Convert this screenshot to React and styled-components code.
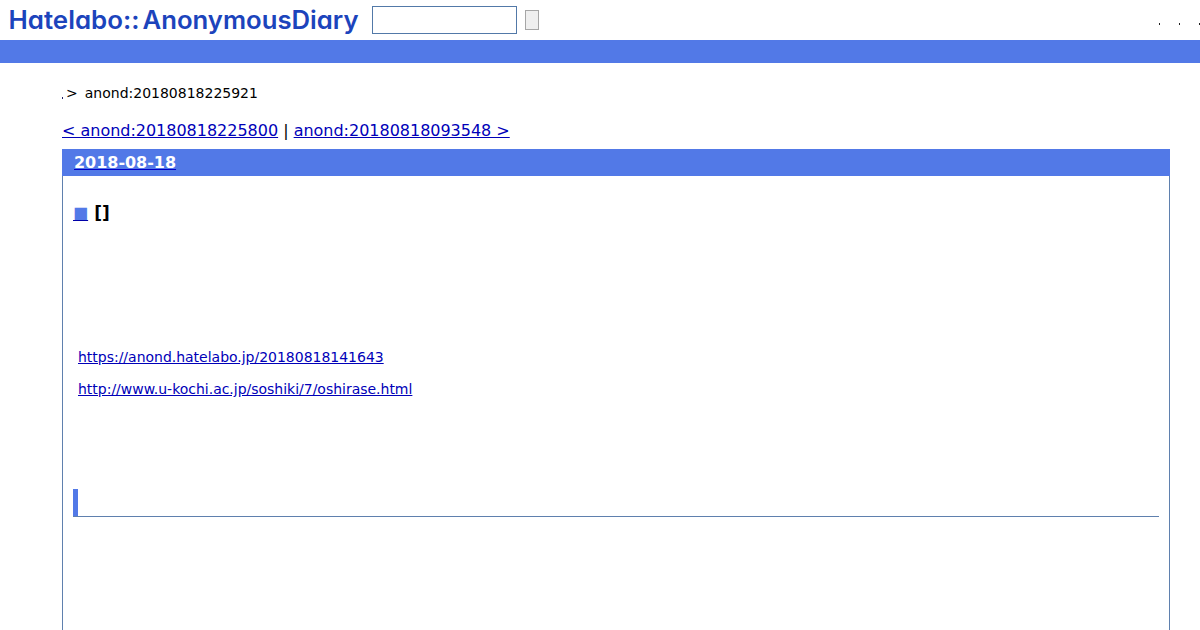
import React from "react";
import styled, { createGlobalStyle } from "styled-components";

const GlobalStyle = createGlobalStyle`
  body {
    margin: 0;
    background: #fff;
    color: #000;
    font-family: "DejaVu Sans", sans-serif;
    font-size: 14px;
  }
`;

const Header = styled.header`
  height: 40px;
  display: flex;
  align-items: flex-start;
`;

const Logo = styled.svg`
  width: 372px;
  height: 40px;
  flex: none;
  fill: #1c44bc;
  font-family: Inter, sans-serif;
  font-size: 25px;
  font-weight: 640;
  font-feature-settings: "cv11";
`;

const SearchForm = styled.form`
  display: flex;
  align-items: center;
  gap: 8px;
  padding-top: 6px;
`;

const SearchInput = styled.input`
  box-sizing: border-box;
  width: 145px;
  height: 28px;
  border: 1px solid #5279a8;
  background: #fff;
  outline: none;
`;

const SearchButton = styled.button`
  box-sizing: border-box;
  width: 14px;
  height: 20px;
  padding: 0;
  border: 1px solid #a6a6a6;
  background: #efefef;
`;

const HeaderMenu = styled.nav`
  display: flex;
  gap: 19px;
  margin-left: auto;
  padding-top: 23px;
`;

const Dot = styled.span`
  width: 1px;
  height: 2px;
  background: ${({ color }) => color || "#222"};
`;

const Bar = styled.div`
  height: 23px;
  background: #5279e7;
`;

const Main = styled.main`
  padding: 20px 30px 0 62px;
`;

const Breadcrumb = styled.div`
  display: flex;
  height: 20px;
  line-height: 20px;
  white-space: pre;

  ${Dot} {
    margin: 14px 3px 0 0;
  }
`;

const Current = styled.span`
  margin-left: 7px;
`;

const Link = styled.a`
  color: #0000b8;
  text-decoration: underline;
`;

const Pager = styled.div`
  height: 20px;
  margin: 18px 0 8px;
  font-size: 16px;
  line-height: 20px;
  letter-spacing: -0.015px;
`;

const Day = styled.section`
  box-sizing: border-box;
  height: 481px;
  border: 1px solid #5f80ae;
  border-width: 0 1px;
`;

const DayTitle = styled.h2`
  height: 27px;
  margin: 0 -1px;
  padding-left: 12px;
  background: #5279e7;
  font-size: 16px;
  line-height: 27px;
  letter-spacing: -0.03px;
`;

const DayLink = styled.a`
  color: #fff;
  text-decoration: underline #0000c8;
`;

const Body = styled.div`
  padding: 27px 10px 0;
`;

const EntryTitle = styled.h3`
  display: flex;
  align-items: center;
  gap: 6px;
  height: 20px;
  margin: 0 0 124px;
  font-size: 16px;
  line-height: 20px;
`;

const Sanchor = styled.span`
  color: #5279e7;
  text-decoration: underline #0000a8;
  text-decoration-skip-ink: none;
  text-underline-offset: 2px;
`;

const Category = styled.span`
  font-size: 17px;
`;

const Paragraph = styled.p`
  height: 20px;
  margin: 0 0 12px 5px;
  line-height: 20px;
  letter-spacing: -0.015px;
`;

const SubHeading = styled.h4`
  height: 27px;
  margin: 90px 0 0;
  border-left: 5px solid #5279e7;
  position: relative;

  &::after {
    content: "";
    position: absolute;
    left: -5px;
    right: 0;
    bottom: -1px;
    height: 1px;
    background: #5f80ae;
  }
`;

const App = () => {
  return (
    <>
      <GlobalStyle />
      <Header>
        <Logo viewBox="0 0 372 40">
          <text x="8.5" y="28.5" textLength="131" lengthAdjust="spacingAndGlyphs">
            Hatelabo::
          </text>
          <text x="142.5" y="28.5" textLength="216" lengthAdjust="spacingAndGlyphs">
            AnonymousDiary
          </text>
        </Logo>
        <SearchForm>
          <SearchInput type="text" />
          <SearchButton type="button" />
        </SearchForm>
        <HeaderMenu>
          <Dot />
          <Dot />
          <Dot />
        </HeaderMenu>
      </Header>
      <Bar />
      <Main>
        <Breadcrumb>
          <Dot color="#222268" />
          <span>&gt;</span>
          <Current>anond:20180818225921</Current>
        </Breadcrumb>
        <Pager>
          <Link>&lt; anond:20180818225800</Link> | <Link>anond:20180818093548 &gt;</Link>
        </Pager>
        <Day>
          <DayTitle>
            <DayLink>2018-08-18</DayLink>
          </DayTitle>
          <Body>
            <EntryTitle>
              <Sanchor>■</Sanchor>
              <Category>[]</Category>
            </EntryTitle>
            <Paragraph>
              <Link>https://anond.hatelabo.jp/20180818141643</Link>
            </Paragraph>
            <Paragraph>
              <Link>http://www.u-kochi.ac.jp/soshiki/7/oshirase.html</Link>
            </Paragraph>
            <SubHeading />
          </Body>
        </Day>
      </Main>
    </>
  );
};

export default App;
